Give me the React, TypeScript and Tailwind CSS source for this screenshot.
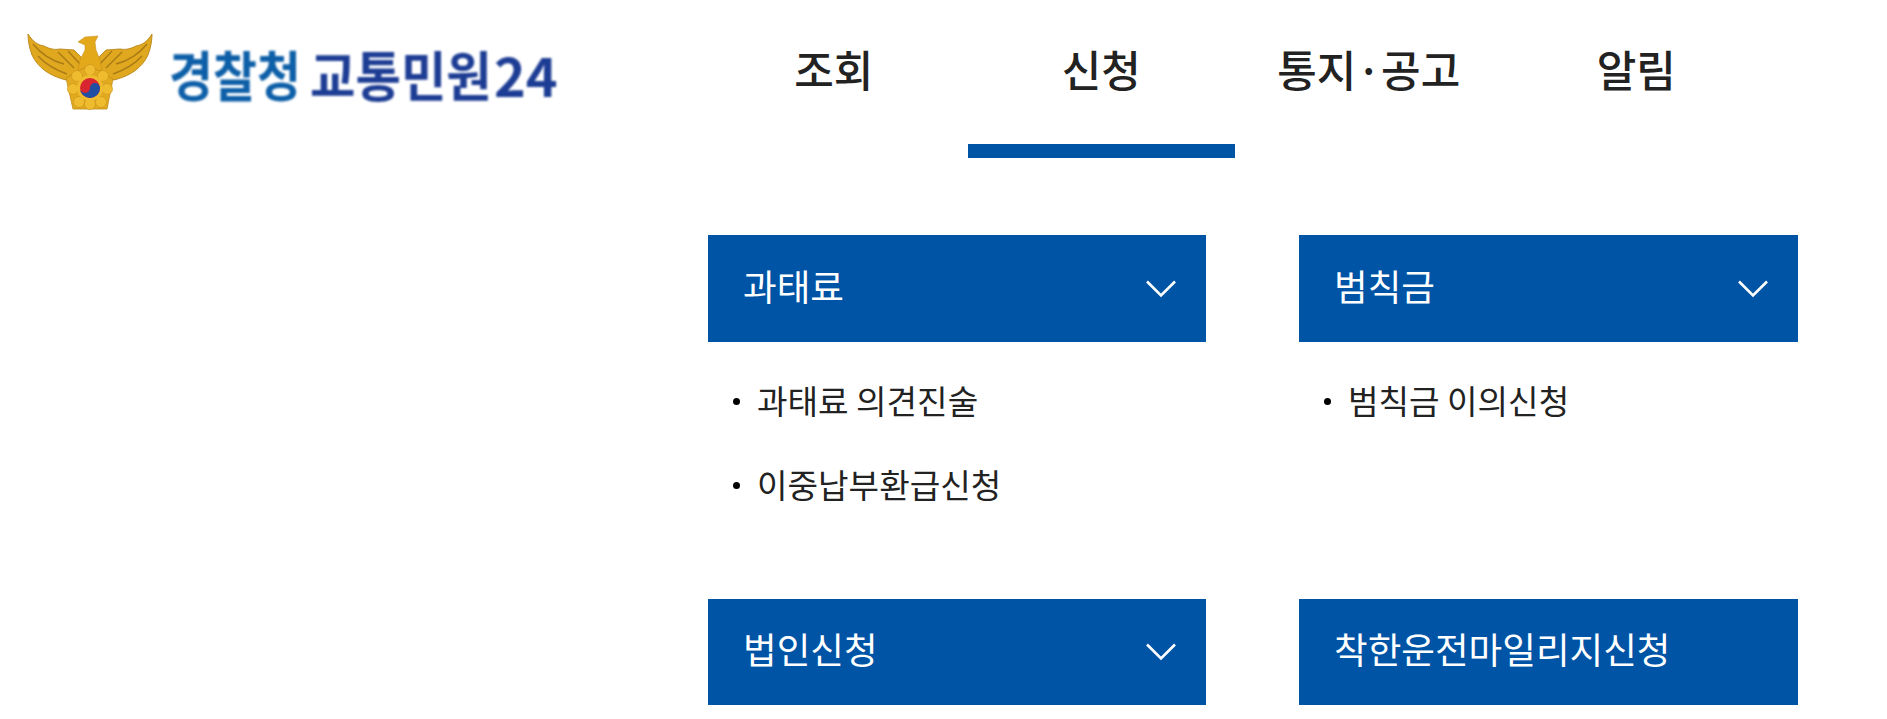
const menus = [
  { title: "과태료", arrow: true, items: ["과태료 의견진술", "이중납부환급신청"] },
  { title: "범칙금", arrow: true, items: ["범칙금 이의신청"] },
  { title: "법인신청", arrow: true, items: [] },
  { title: "착한운전마일리지신청", arrow: false, items: [] },
];

const tabs = ["조회", "신청", "통지·공고", "알림"];

const petals = [
  [90, 70],
  [77, 76],
  [73, 89],
  [79, 102],
  [90, 104],
  [101, 102],
  [107, 89],
  [103, 76],
];

function Emblem() {
  return (
    <svg width="128" height="84" viewBox="26 30 128 84" className="shrink-0 blur-[0.7px]">
      {/* wings */}
      <path
        d="M28 34 C33 42 38 45 44 46 C50 49 54 50 60 49 L74 50 L82 58 L84 74 L66 80 C50 76 38 68 32 55 C29 47 28 40 28 34 Z"
        fill="#dfa81e"
        stroke="#b98518"
        strokeWidth="0.9"
      />
      <path
        d="M152 34 C147 42 142 45 136 46 C130 49 126 50 120 49 L106 50 L98 58 L96 74 L114 80 C130 76 142 68 148 55 C151 47 152 40 152 34 Z"
        fill="#dfa81e"
        stroke="#b98518"
        strokeWidth="0.9"
      />
      <path d="M33 44 C42 55 52 61 64 64 M38 56 C46 65 56 70 67 74 M58 52 L74 68 M68 51 L80 64" stroke="#a97a16" strokeWidth="1.4" fill="none" />
      <path d="M147 44 C138 55 128 61 116 64 M142 56 C134 65 124 70 113 74 M122 52 L106 68 M112 51 L100 64" stroke="#a97a16" strokeWidth="1.4" fill="none" />
      {/* head and body */}
      <path d="M78 42 L85 37 L98 36 L95 42 L96 50 L100 60 L102 70 L90 74 L78 70 L80 60 L85 50 L85 45 Z" fill="#e3a91a" stroke="#c08a18" strokeWidth="0.5" />
      {/* shield */}
      <path d="M89 65 L113 79 L107 109 L73 109 L66 78 Z" fill="#e2aa1f" stroke="#c08a18" strokeWidth="0.8" />
      {petals.map(([cx, cy]) => (
        <circle key={`${cx}-${cy}`} cx={cx} cy={cy} r="5.5" fill="#efbc30" stroke="#c8921a" strokeWidth="0.6" />
      ))}
      <circle cx="90" cy="88" r="13" fill="#efbc30" />
      {/* taegeuk */}
      <circle cx="90" cy="88" r="10" fill="#d9252f" />
      <path d="M80 88 A10 10 0 0 0 100 88 A5 5 0 0 0 90 88 A5 5 0 0 1 80 88 Z" fill="#1f4ea3" />
    </svg>
  );
}

function Chevron() {
  return (
    <svg width="32" height="20" viewBox="0 0 32 20" fill="none" className="shrink-0">
      <path d="M2 2.5 L16 16.5 L30 2.5" stroke="#ffffff" strokeWidth="2.6" />
    </svg>
  );
}

function MenuCard({ title, arrow, items }: { title: string; arrow: boolean; items: string[] }) {
  return (
    <div className="min-h-[363.4px] [&:nth-child(n+3)]:min-h-0">
      <div className="flex h-[106.5px] items-center justify-between bg-[#0054a6] pl-[35px] pr-[29px] text-[36.6px] text-white">
        <span className="-translate-y-[2px]">{title}</span>
        {arrow && <Chevron />}
      </div>
      <ul className="pt-[16px]">
        {items.map((item) => (
          <li key={item} className="flex h-[84px] items-center pl-[25px] text-[33.2px] text-[#222222]">
            <span className="mr-[17px] h-[7px] w-[7px] translate-y-[2px] rounded-full bg-black" />
            {item}
          </li>
        ))}
      </ul>
    </div>
  );
}

export default function App() {
  return (
    <div className="min-h-[719px] bg-white font-['Noto_Sans_CJK_KR','Noto_Sans',sans-serif]">
      <header className="flex h-[158px]">
        <div className="flex w-[700px] items-start pl-[26px] pt-[30px]">
          <Emblem />
          {/* logo wordmark, squeezed horizontally like the original bitmap */}
          <div className="ml-[15px] flex h-[84px] items-center whitespace-nowrap pt-[4px] text-[54px] font-bold leading-none blur-[0.8px]">
            <span className="w-[141px] origin-left scale-x-[0.885] text-[#0d5fa8]">경찰청</span>
            <span className="w-[184px] origin-left scale-x-[0.915] text-[#1d3d94]">교통민원</span>
            <span className="text-[#1d3d94]">24</span>
          </div>
        </div>
        <nav className="flex">
          {tabs.map((tab) => (
            <div
              key={tab}
              className={
                tab === "신청"
                  ? "flex w-[267.5px] items-center justify-center border-b-[14px] border-[#0054a6] pb-[8px] text-[43px] font-medium text-[#222222]"
                  : "flex w-[267.5px] items-center justify-center border-b-[14px] border-transparent pb-[8px] text-[43px] font-medium text-[#222222]"
              }
            >
              {tab}
            </div>
          ))}
        </nav>
      </header>
      <main className="grid grid-cols-[498px_499px] gap-x-[93px] pl-[708px] pt-[77.3px]">
        {menus.map((menu) => (
          <MenuCard key={menu.title} {...menu} />
        ))}
      </main>
    </div>
  );
}
